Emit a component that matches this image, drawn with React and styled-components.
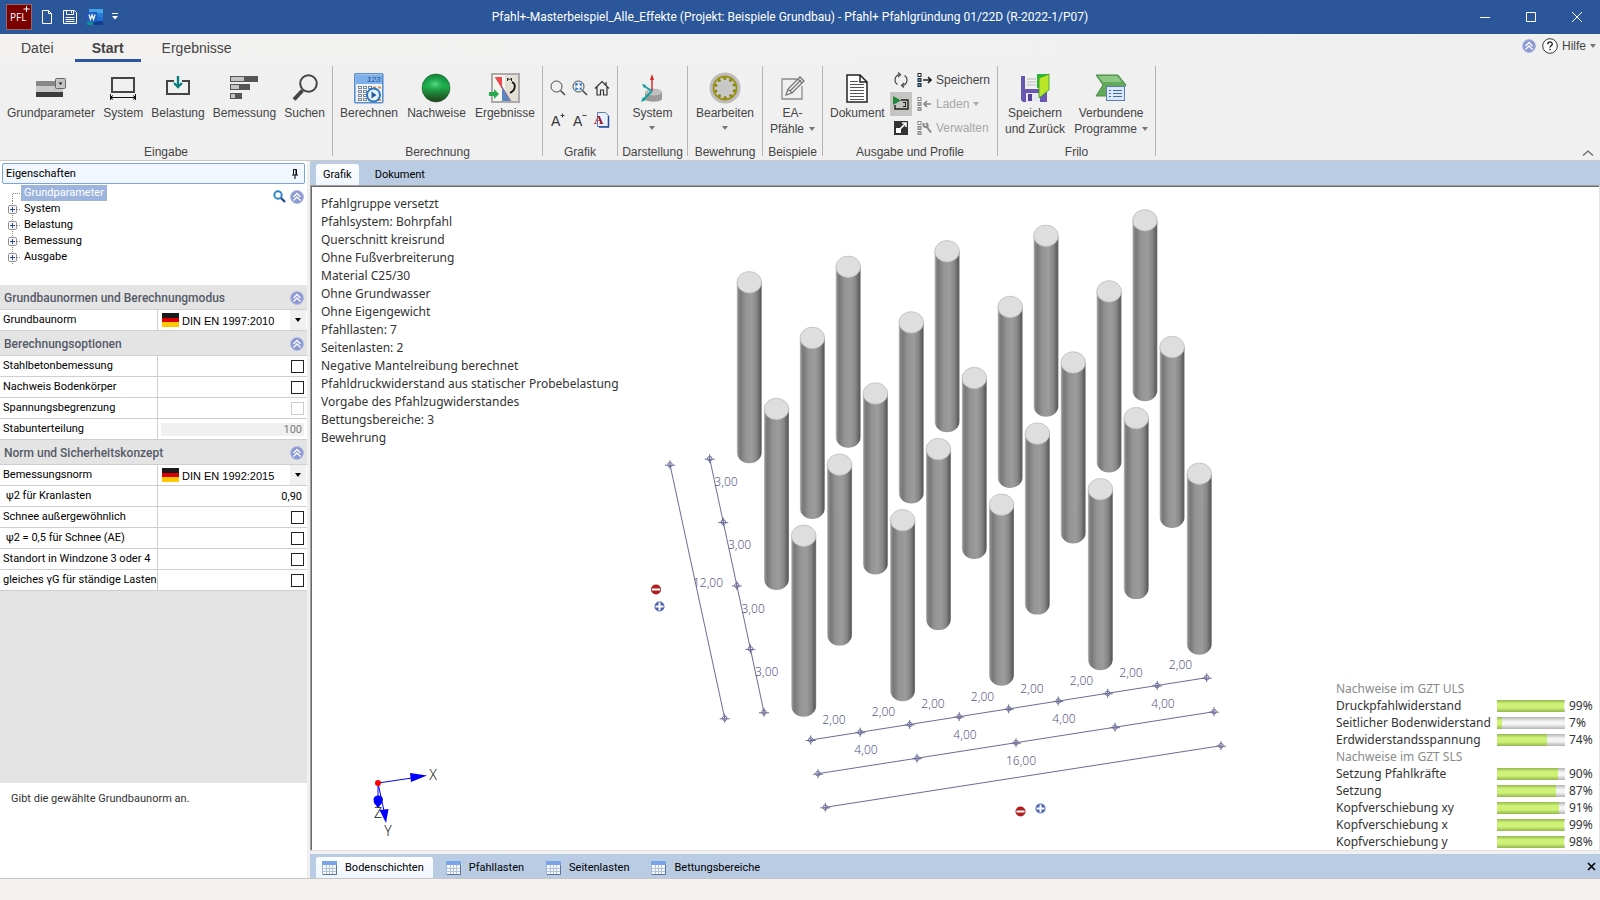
import React from 'react'
import styled, { createGlobalStyle, css } from 'styled-components'

const GlobalStyle = createGlobalStyle`
  * { box-sizing: border-box; }
  html, body { margin: 0; padding: 0; }
  body {
    font-family: 'Liberation Sans', Arial, sans-serif;
    font-size: 12px;
    color: #444;
    background: #f0f0f0;
  }
  button, input, select { font: inherit; color: inherit; margin: 0; }
  button { background: none; border: none; padding: 0; cursor: pointer; }
  svg { display: block; flex: none; }
`

const Window = styled.div`
  min-height: 100vh;
  display: flex;
  flex-direction: column;
`

/* title bar */

const TitleBar = styled.header`
  height: 34px;
  display: grid;
  grid-template-columns: 118px 1fr 138px;
  align-items: center;
  background: #2b579a;
  color: #fff;
`

const QuickAccess = styled.div`
  display: flex;
  align-items: center;
  gap: 9px;
  padding-left: 6px;
`

const Title = styled.h1`
  margin: 0;
  text-align: center;
  font: 400 12px/16px Roboto, sans-serif;
  white-space: nowrap;
`

const WindowControls = styled.div`
  display: grid;
  grid-template-columns: repeat(3, 46px);
`

const ControlButton = styled.button`
  height: 34px;
  display: flex;
  align-items: center;
  justify-content: center;
`

/* ribbon */

const RibbonTabs = styled.nav`
  height: 28px;
  display: flex;
  background: linear-gradient(90deg, #f3f2f1, #f0f0f0);
`

const RibbonTab = styled.button`
  padding: 3px ${({ $active }) => ($active ? 17 : 21)}px 0;
  font-size: 14px;
  line-height: 22px;
  font-weight: ${({ $active }) => ($active ? 700 : 400)};
  border-bottom: 3px solid ${({ $active }) => ($active ? '#2b579a' : 'transparent')};
`

const HelpArea = styled.div`
  margin-left: auto;
  height: 23px;
  padding-right: 4px;
  display: flex;
  align-items: center;
  gap: 6px;
`

const HelpButton = styled.button`
  display: flex;
  align-items: center;
  gap: 4px;
`

const RibbonBar = styled.div`
  display: flex;
  padding-top: 4px;
  height: 99px;
  background: #f0f0f0;
  border-bottom: 1px solid #c8c8c8;
`

const Group = styled.section`
  width: ${({ $width }) => $width}px;
  display: flex;
  flex-direction: column;
  padding-top: 6px;
`

const GroupTools = styled.div`
  flex: 1;
  display: flex;
  justify-content: ${({ $center }) => ($center ? 'center' : 'space-between')};
  align-items: flex-start;
  padding: 0 ${({ $pad }) => $pad || 0}px;
`

const GroupTitle = styled.div`
  text-align: center;
  line-height: 16px;
  white-space: nowrap;
`

const Separator = styled.div`
  width: 1px;
  height: 90px;
  background: #b4b4b4;
`

const BigButton = styled.button`
  display: flex;
  flex-direction: column;
  align-items: center;
  gap: 1px;
  line-height: 16px;
  white-space: nowrap;
`

const IconBox = styled.span`
  height: 32px;
  display: flex;
  align-items: center;
  justify-content: center;
`

const Lines = styled.span`
  display: flex;
  flex-direction: column;
  align-items: center;
  gap: ${({ $loose }) => ($loose ? 5 : 0)}px;
`

const Line = styled.span`
  display: flex;
  align-items: center;
  gap: 5px;
`

const Caret = styled.span`
  border: 3px solid transparent;
  border-top: 4px solid ${({ $color }) => $color || '#777'};
  border-bottom: none;
`

const SmallGrid = styled.div`
  display: grid;
  grid-template-columns: repeat(3, 22px);
  grid-auto-rows: 32px;
`

const SmallButton = styled.button`
  display: flex;
  align-items: center;
  justify-content: center;
  width: 22px;
  height: ${({ $tall }) => ($tall ? 32 : 24)}px;
  background: ${({ $pressed }) => ($pressed ? '#c6c4c2' : 'none')};
`

const SmallColumn = styled.div`
  display: flex;
  flex-direction: column;
  margin-top: -4px;
`

const TextButton = styled.button`
  display: flex;
  align-items: center;
  gap: 4px;
  height: 24px;
  &:disabled { color: #a8a8a8; cursor: default; }
`

const CollapseButton = styled.button`
  margin-left: auto;
  align-self: flex-end;
  padding: 0 6px 4px 0;
`

/* property panel */

const Workspace = styled.main`
  flex: 1;
  display: flex;
`

const panelText = css`
  font-family: Roboto, sans-serif;
  font-size: 11px;
`

const Panel = styled.aside`
  ${panelText}
  width: 307px;
  flex: none;
  margin-right: 3px;
  display: flex;
  flex-direction: column;
  background: #fff;
  color: #000;
`

const PanelHeader = styled.header`
  display: flex;
  justify-content: space-between;
  align-items: center;
  height: 21px;
  margin: 2px 2px 1px;
  padding: 0 5px 0 3px;
  border: 1px solid #7da2dc;
  border-radius: 2px;
  background: #f0f7ff;
`

const TreeArea = styled.div`
  display: flex;
  height: 100px;
  padding: 0 3px 0 8px;
`

const Tree = styled.ul`
  flex: 1;
  margin: 0;
  padding: 0;
  list-style: none;
`

const TreeItem = styled.li`
  display: flex;
  align-items: center;
  height: 16px;
`

const TreeLabel = styled.span`
  padding: 0 3px;
  line-height: 16px;
  background: ${({ $selected }) => ($selected ? '#9db4de' : 'none')};
  color: ${({ $selected }) => ($selected ? '#fff' : '#000')};
`

const TreeTools = styled.div`
  display: flex;
  align-items: flex-start;
  gap: 4px;
  padding-top: 5px;
`

const Category = styled.h2`
  margin: 0;
  height: 25px;
  padding: 1px 3px 0 4px;
  display: flex;
  align-items: center;
  justify-content: space-between;
  background: #e4e4e4;
  border-bottom: 1px solid #cfcfcf;
  color: #555a68;
  font: 500 12px/16px Roboto, sans-serif;
`

const PropRow = styled.div`
  display: grid;
  grid-template-columns: 157px 1fr;
  height: 21px;
  border-bottom: 1px solid #cfcfcf;
`

const PropLabel = styled.label`
  padding-left: ${({ $indent }) => ($indent ? 6 : 3)}px;
  line-height: 20px;
  white-space: nowrap;
`

const PropValue = styled.div`
  display: flex;
  align-items: center;
  justify-content: flex-end;
  padding: 0 3px;
  border-left: 1px solid #cfcfcf;
`

const NormValue = styled(PropValue)`
  padding: 0 1px 0 4px;
  gap: 3px;
`

const NormSelect = styled.select`
  flex: 1;
  height: 20px;
  padding: 2px 0 0;
  border: none;
  outline: none;
  appearance: none;
  background: #fff;
  font-family: 'Liberation Sans', sans-serif;
`

const SelectArrow = styled.span`
  width: 16px;
  height: 20px;
  display: flex;
  align-items: center;
  justify-content: center;
  background: #f0f0f0;
  pointer-events: none;
`

const NumberInput = styled.input`
  width: 100%;
  height: 13px;
  padding: 0 2px;
  border: none;
  outline: none;
  text-align: right;
  background: #fff;
  &:disabled { background: #f0f0f0; color: #7d7d7d; }
`

const Tick = styled.input`
  appearance: none;
  width: 13px;
  height: 13px;
  border: 1px solid #222;
  background: #fff;
  &:disabled { border-color: #ccc; }
  &:checked { background: #2b579a; }
`

const PanelFill = styled.div`
  flex: 1;
  background: #e3e3e3;
`

const Description = styled.p`
  margin: 0;
  height: 95px;
  padding: 8px 11px;
  line-height: 16px;
  color: #333;
`

/* document area */

const DocumentArea = styled.section`
  flex: 1;
  min-width: 0;
  display: flex;
  flex-direction: column;
`

const TabStrip = styled.nav`
  ${panelText}
  display: flex;
  align-items: flex-end;
  gap: ${({ $bottom }) => ($bottom ? 7 : 9)}px;
  height: 24px;
  padding: ${({ $bottom }) => ($bottom ? '0 4px 0 6px' : '3px 4px 0 6px')};
  background: #bacce4;
  color: #000;
`

const Tab = styled.button`
  display: flex;
  align-items: center;
  gap: 8px;
  height: 21px;
  padding: 0 7px;
  border-radius: 3px 3px 0 0;
  background: ${({ $active }) => ($active ? 'linear-gradient(#fdfeff, #eff6fe)' : 'none')};
`

const TableTab = styled(Tab)`
  padding: 0 9px 0 6px;
`

const CloseButton = styled.button`
  margin-left: auto;
  align-self: center;
`

const Canvas = styled.div`
  flex: 1;
  display: grid;
  margin-bottom: 3px;
  padding: 1px 0 0 1px;
  border: 1px solid #a0a0a0;
  border-right-color: #e3e3e3;
  border-bottom-color: #e3e3e3;
  box-shadow: inset 1px 1px 0 #696969;
  background: #fff;
  font-family: 'Noto Sans', sans-serif;
  font-size: 12px;
  color: #333;
  & > * { grid-area: 1 / 1; }
`

const Drawing = styled.svg`
  width: 100%;
  height: 100%;
`

const InfoList = styled.ul`
  margin: 0;
  padding: 8px 9px;
  list-style: none;
  line-height: 18px;
`

const Results = styled.table`
  place-self: end;
  margin-right: 1px;
  border-collapse: collapse;
  line-height: 17px;
  td, th { height: 17px; padding: 0; font-weight: 400; text-align: left; white-space: nowrap; }
  th[colspan] { color: #8a8a8a; }
`

const NameCell = styled.th`
  min-width: 161px;
`

const Track = styled.div`
  width: 68px;
  height: 12px;
  background: linear-gradient(#b4b4b4, #f2f2f2 35%, #f6f6f6 60%, #b4b4b4);
`

const Fill = styled.div`
  height: 12px;
  background: linear-gradient(#95b54e, #cdf277 30%, #cdf277 65%, #95b54e);
`

const PercentCell = styled.td`
  width: 33px;
  && { padding-left: 4px; }
`

const StatusBar = styled.footer`
  height: 22px;
  background: #f3f2f1;
  border-top: 1px solid #c8c6c4;
`

/* icons */

const PflLogo = () => (
  <svg width="26" height="26" viewBox="0 0 26 26">
    <rect x=".5" y=".5" width="25" height="25" fill="#7b0000" stroke="#8a6a6a" />
    <text x="4" y="17" fontFamily="Open Sans" fontSize="10" fill="#fff">PFL</text>
    <path d="M20.500 2v6M17.500 5h6" stroke="#fff" />
  </svg>
)

const NewIcon = () => (
  <svg width="12" height="16" viewBox="0 0 12 16" fill="none" stroke="#fff">
    <path d="M1.500 1.500h6l3 3v10h-9zM7.500 1.500v3h3" />
  </svg>
)

const SaveIcon = () => (
  <svg width="16" height="16" viewBox="0 0 16 16" fill="none" stroke="#fff">
    <path d="M1.500 1.500h11l2 2v11h-13zM4.500 1.500v4h7v-4M9.500 2v2M3.500 8.500h9M3.500 10.500h9M3.500 12.500h9" />
  </svg>
)

const WordIcon = () => (
  <svg width="16" height="16" viewBox="0 0 16 16">
    <rect x="2" width="14" height="4" fill="#41a5ee" />
    <rect x="2" y="4" width="14" height="4" fill="#2b7cd3" />
    <rect x="2" y="8" width="14" height="4" fill="#1f6fd0" />
    <rect y="12" width="16" height="4" fill="#0d8f98" />
    <rect x="6" y="12" width="10" height="4" fill="#103f91" />
    <rect y="3" width="10" height="10" fill="#1b5cbe" />
    <path d="M2 5.500l1.500 5L5 6l1.500 4.500L8 5.500" stroke="#fff" strokeWidth="1.200" fill="none" />
  </svg>
)

const MoreIcon = () => (
  <svg width="6" height="8" viewBox="0 0 6 8" fill="#fff">
    <path d="M0 0h6v1H0zM0 3h6L3 6.500z" />
  </svg>
)

const RoundChevron = () => (
  <svg width="14" height="14" viewBox="0 0 14 14" fill="none">
    <circle cx="7" cy="7" r="6.500" fill="#8c98d4" stroke="#b4bce0" />
    <path d="M3.500 7L7 3.500 10.500 7M3.500 10.500L7 7l3.500 3.500" stroke="#fff" strokeWidth="1.300" />
  </svg>
)

const HelpIcon = () => (
  <svg width="16" height="16" viewBox="0 0 16 16" fill="none" stroke="#333">
    <circle cx="8" cy="8" r="7.300" fill="#fff" />
    <path d="M5.700 6.200C5.700 3.300 10.300 3.300 10.300 6c0 1.700-2.300 1.700-2.300 3.600M8 10.800v1.500" strokeWidth="1.500" />
  </svg>
)

const ParamIcon = () => (
  <svg width="32" height="20" viewBox="0 0 32 20">
    <rect x="1" y="3" width="27" height="5" fill="#888" />
    <rect x="1" y="8" width="27" height="6" fill="#c9c9c9" />
    <rect x="1" y="14" width="27" height="5" fill="#3c3c3c" />
    <rect x="20.500" y=".5" width="10" height="10" rx="1" fill="#c4c4c4" stroke="#666" />
    <path d="M23.500 4.500h4l-2 2.500z" fill="#222" />
  </svg>
)

const SystemIcon = () => (
  <svg width="28" height="24" viewBox="0 0 28 24" fill="none">
    <rect x="3" y="2" width="22" height="14" stroke="#444" strokeWidth="2" />
    <path d="M1 21.500h26M1.500 18v6M26.500 18v6M4 19.500l-3 2 3 2M24 19.500l3 2-3 2" stroke="#111" />
  </svg>
)

const LoadIcon = () => (
  <svg width="26" height="26" viewBox="0 0 26 26" fill="none">
    <path d="M9 6H2v13h22V6h-7" stroke="#444" strokeWidth="2" />
    <path d="M13 1v10M9 8l4 4 4-4" stroke="#0b8080" strokeWidth="2.400" />
  </svg>
)

const DesignIcon = () => (
  <svg width="28" height="24" viewBox="0 0 28 24" stroke="#555">
    <rect x=".5" y=".5" width="14" height="5" fill="#c4c4c4" />
    <rect x="14.500" y=".5" width="13" height="5" fill="#555" />
    <rect x=".5" y="8.500" width="9" height="5" fill="#c4c4c4" />
    <rect x="10.500" y="8.500" width="9" height="5" fill="#555" />
    <rect x=".5" y="17.500" width="5" height="5" fill="#c4c4c4" />
    <rect x="6.500" y="17.500" width="5" height="5" fill="#555" />
  </svg>
)

const MagnifierIcon = () => (
  <svg width="26" height="28" viewBox="0 0 26 28" fill="none" stroke="#444">
    <circle cx="16.500" cy="9.500" r="8.300" strokeWidth="2" />
    <path d="M10.500 16.500L2 25.500" strokeWidth="4" />
  </svg>
)

const CalcIcon = () => (
  <svg width="30" height="31" viewBox="0 0 30 31">
    <rect x=".8" y=".8" width="28" height="29" rx="1" fill="#edf3fb" stroke="#5c8fce" strokeWidth="1.600" />
    <rect x="2" y="2" width="26" height="9" fill="#7fb0ee" />
    <text x="13" y="9" fontSize="8" fontStyle="italic" fill="#234a86">123</text>
    <g fill="#fff" stroke="#7c8797">
      {[13, 17, 21, 25].map((y) =>
        [4.5, 9.5, 14.5].map((x) => <rect key={x + '-' + y} x={x} y={y + 0.5} width="3" height="2" />)
      )}
    </g>
    <path d="M19 13.500h3v2h-3zM24 13.500h3v2h-3zM24 26h3v2h-3z" fill="#e58e3c" />
    <circle cx="19.500" cy="22" r="6.500" fill="#e8f2fb" stroke="#2f78bd" strokeWidth="2" />
    <path d="M17.500 18.500l5 3.500-5 3.500z" fill="#1d5f9f" />
  </svg>
)

const BallIcon = () => (
  <svg width="30" height="30" viewBox="0 0 30 30">
    <defs>
      <linearGradient id="ball" x1="0" y1="0" x2="0" y2="1">
        <stop offset="0" stopColor="#12883d" />
        <stop offset=".45" stopColor="#1cae4c" />
        <stop offset="1" stopColor="#24401a" />
      </linearGradient>
      <radialGradient id="shine">
        <stop offset="0" stopColor="#5ddc85" />
        <stop offset="1" stopColor="#1cae4c" stopOpacity="0" />
      </radialGradient>
    </defs>
    <circle cx="15" cy="15" r="14" fill="url(#ball)" stroke="#1a5a2b" strokeWidth=".6" />
    <ellipse cx="14" cy="11" rx="11" ry="8" fill="url(#shine)" />
  </svg>
)

const ResultIcon = () => (
  <svg width="31" height="30" viewBox="0 0 31 30">
    <rect x="3" y="1" width="27" height="28" fill="#f6f4ee" stroke="#aaa" strokeWidth="2" />
    <rect x="16" y="2" width="13" height="26" fill="#e4dfd4" />
    <path d="M6 4h7v12z" fill="#f04a50" />
    <path d="M13 13l9 15h-9z" fill="#5a86c4" />
    <path d="M6 4l16 24" stroke="#b55" strokeWidth=".6" />
    <path d="M23 9c4 2 4 8-2 11" fill="none" stroke="#111" strokeWidth="1.800" />
    <path d="M18.500 8V5l2 2 2-2v3" fill="none" stroke="#222" />
    <path d="M0 19h5v-3l5 5-5 5v-3H0z" fill="#2aa94a" />
  </svg>
)

const ZoomIcon = ({ extents }) => (
  <svg width="16" height="16" viewBox="0 0 16 16" fill="none" stroke="#444">
    <circle cx="6.500" cy="6.500" r="5.500" />
    <path d="M10.500 10.500l4.500 4.500" strokeWidth="1.500" />
    {extents && <path d="M4 6V4h2M7.500 4H9v2M9 7.500V9H7.500M6 9H4V7.500" stroke="#1b74d0" strokeWidth="1.400" />}
  </svg>
)

const HomeIcon = () => (
  <svg width="16" height="16" viewBox="0 0 16 16" fill="none" stroke="#333" strokeWidth="1.200">
    <path d="M1 8.500L8 1.500l7 7M3 7v8h3.500v-5h3v5H13V7M12 5V2" />
  </svg>
)

const FontSizeIcon = ({ sign }) => (
  <svg width="16" height="16" viewBox="0 0 16 16" stroke="#444">
    <text x="1" y="14" fontSize="14" fill="#333" stroke="none">A</text>
    <path d={sign === '+' ? 'M10.500 3.500h4M12.500 1.500v4' : 'M10.500 3.500h4'} />
  </svg>
)

const FontDocIcon = () => (
  <svg width="16" height="18" viewBox="0 0 16 18">
    <path d="M3.500 1.500h8l3 3v11h-11z" fill="#e9effb" stroke="#5a7bc0" />
    <path d="M14.500 5v11H5" fill="none" stroke="#24499c" strokeWidth="1.500" />
    <text x="0" y="13" fontFamily="Liberation Serif" fontWeight="700" fontSize="13" fill="#9a0d18">A</text>
  </svg>
)

const PileSystemIcon = () => (
  <svg width="22" height="30" viewBox="0 0 22 30">
    <path d="M4 19v7c0 3.500 17 3.500 17 0v-7z" fill="#9a9a9a" />
    <ellipse cx="12.500" cy="19" rx="8.500" ry="3.500" fill="#c0c0c0" />
    <path d="M11 18V5" stroke="#d22" strokeWidth="1.400" />
    <path d="M11 1l2 6H9z" fill="#d22" />
    <path d="M11 18L3 26M11 18L3 13" stroke="#12a0a0" strokeWidth="1.800" />
    <path d="M0 29l5-2-3-3zM1 11l2 4 2-3z" fill="#12a0a0" />
  </svg>
)

const RebarIcon = () => (
  <svg width="32" height="32" viewBox="0 0 32 32">
    <circle cx="16" cy="16" r="15.500" fill="#bdbdbd" />
    <circle cx="16" cy="16" r="11.500" fill="#c8c8c8" stroke="#9a9210" strokeWidth="1.800" />
    {Array.from({ length: 10 }, (_, i) => {
      const a = (i * Math.PI) / 5 + 0.3
      return <circle key={i} cx={16 + 9.5 * Math.cos(a)} cy={16 + 9.5 * Math.sin(a)} r="1.500" fill="#8c8510" />
    })}
  </svg>
)

const PencilIcon = () => (
  <svg width="26" height="26" viewBox="0 0 26 26" fill="none" stroke="#8a8a8a" strokeWidth="1.300">
    <path d="M17 4H2v20h20V11" />
    <path d="M6 20l2-6L20 2l4 4-12 12zM8 14l4 4M18 4l4 4M10 16L21 5" stroke="#777" />
  </svg>
)

const DocIcon = () => (
  <svg width="22" height="29" viewBox="0 0 22 29" fill="none">
    <path d="M1 1h13l7 7v20H1z" fill="#fff" stroke="#222" strokeWidth="1.500" />
    <path d="M14 1v7h7" stroke="#222" strokeWidth="1.500" />
    <path d="M4 7.500h8M4 10.500h14M4 13.500h14M4 16.500h14M4 19.500h14M4 22.500h14M4 25.500h14" stroke="#555" />
  </svg>
)

const RefreshIcon = () => (
  <svg width="16" height="16" viewBox="0 0 16 16" fill="none" stroke="#444" strokeWidth="1.200">
    <path d="M6.500 2.500A5.500 5.500 0 0 0 4.500 12.500M9.500 13.500A5.500 5.500 0 0 0 11.500 3.500" />
    <path d="M5 .5l2.500 2L5 5M11 11l-2.500 2.500 2.500 2" />
  </svg>
)

const PreviewIcon = () => (
  <svg width="18" height="16" viewBox="0 0 18 16">
    <path d="M9 4h7v9H3V9" fill="none" stroke="#222" strokeWidth="1.400" />
    <path d="M1 0l8 4.500L1 9z" fill="#1f8a3a" />
    <path d="M13.500 6v5M11 6.500h2M11 10.500h2" stroke="#222" />
  </svg>
)

const OpenOutIcon = () => (
  <svg width="16" height="16" viewBox="0 0 16 16">
    <rect x="1" y="1" width="14" height="14" fill="#333" />
    <path d="M3 8h5v5H3z" fill="#fff" />
    <path d="M7 9l6-6M9 3h4v4" stroke="#fff" strokeWidth="1.600" fill="none" />
  </svg>
)

const ProfileIcon = ({ kind }) => {
  const color = kind === 'save' ? '#222' : '#888'
  return (
    <svg width="15" height="16" viewBox="0 0 15 16" fill="none" stroke={color}>
      <rect x="1" y="1.500" width="3" height="3" fill="#fff" />
      <rect x="1" y="6.500" width="3" height="3" fill={kind === 'save' ? '#3aa0e8' : '#bbb'} />
      <rect x="1" y="11.500" width="3" height="3" fill={kind === 'save' ? '#3aa0e8' : '#bbb'} />
      {kind === 'save' && <path d="M6 8h8M11 5l3 3-3 3" strokeWidth="1.600" />}
      {kind === 'load' && <path d="M14 8H7M10 5L7 8l3 3" strokeWidth="1.600" />}
      {kind === 'manage' && <path d="M6.500 3v2.500L8 7h2.500V4.500L9 3M9.500 6.500l4.500 6" strokeWidth="2" />}
    </svg>
  )
}

const SaveBackIcon = () => (
  <svg width="30" height="30" viewBox="0 0 30 30">
    <path d="M1 3h26v26H3l-2-2z" fill="#6a58b0" />
    <rect x="5" y="3" width="14" height="13" fill="#f0f0f0" />
    <path d="M7 6h9M7 9h9M7 12h9" stroke="#bbb" />
    <rect x="6" y="20" width="14" height="9" fill="#e8e8ee" />
    <rect x="8" y="21" width="4" height="7" fill="#55459a" />
    <path d="M17 1h12v14h-12z" fill="#27b53c" />
    <path d="M19 5l10-4v16l-10 8z" fill="#b9e626" stroke="#2c9e28" strokeWidth=".8" />
  </svg>
)

const LinkedIcon = () => (
  <svg width="32" height="28" viewBox="0 0 32 28">
    <path d="M1 1h22l8 10-8 11H1l7-11z" fill="#62a95b" stroke="#4c8a48" />
    <path d="M3 2h19l5 6H8z" fill="#8cc884" />
    <rect x="11.500" y="12.500" width="18" height="14" fill="#dbe8f8" stroke="#5b7fb5" />
    <path d="M14 16.500h2M14 19.500h2M14 22.500h2M18 16.500h9M18 19.500h9M18 22.500h9" stroke="#4668a8" />
  </svg>
)

const CollapseIcon = () => (
  <svg width="12" height="6" viewBox="0 0 12 6" fill="none" stroke="#666" strokeWidth="1.300">
    <path d="M1 5.500L6 1l5 4.500" />
  </svg>
)

const PinIcon = () => (
  <svg width="8" height="10" viewBox="0 0 8 10" fill="none" stroke="#000">
    <path d="M2.500 5.500V.5h3v5M5 1v5M1 6h6M4 6v4" />
  </svg>
)

const SearchBlueIcon = () => (
  <svg width="13" height="13" viewBox="0 0 13 13" fill="none">
    <circle cx="5" cy="5" r="3.700" stroke="#2f86c8" strokeWidth="2" />
    <path d="M8 8l4 4" stroke="#2a4a8c" strokeWidth="2.400" />
  </svg>
)

const TreeNode = ({ root }) => (
  <svg width="13" height="16" viewBox="0 0 13 16" fill="none">
    {root ? (
      <path d="M4.500 16V8.500H13" stroke="#888" strokeDasharray="1 1" />
    ) : (
      <>
        <path d="M4.500 0v16M9 8.500h4" stroke="#888" strokeDasharray="1 1" />
        <rect x=".5" y="4.500" width="8" height="8" rx="1" fill="#f6f6f6" stroke="#8f8f8f" />
        <path d="M2 8.500h5M4.500 6v5" stroke="#2a4a9a" />
      </>
    )}
  </svg>
)

const Flag = () => (
  <svg width="17" height="14" viewBox="0 0 17 14">
    <rect width="17" height="5" fill="#1a1a1a" />
    <rect y="5" width="17" height="5" fill="#d80000" />
    <rect y="9" width="17" height="5" fill="#ffc800" />
  </svg>
)

const TableIcon = () => (
  <svg width="15" height="14" viewBox="0 0 15 14">
    <rect x=".5" y=".5" width="14" height="13" fill="#f4f8ff" stroke="#a3b8d8" />
    <rect width="15" height="4" fill="#7ba3e8" />
    <path d="M1 7.500h13M1 10.500h13M4.500 4v9M7.500 4v9M10.500 4v9" stroke="#b4c3da" />
    <path d="M14.500 4v9.500H1" stroke="#5c7394" fill="none" />
  </svg>
)

/* ribbon groups */

const Tool = ({ icon, lines, caret }) => (
  <BigButton>
    <IconBox>{icon}</IconBox>
    <Lines $loose={caret === 'below'}>
      {lines.map((line, i) => (
        <Line key={line}>
          {line}
          {caret === 'inline' && i === lines.length - 1 && <Caret />}
        </Line>
      ))}
      {caret === 'below' && <Caret />}
    </Lines>
  </BigButton>
)

const Ribbon = () => (
  <RibbonBar>
    <Group $width={332}>
      <GroupTools $pad={7}>
        <Tool icon={<ParamIcon />} lines={['Grundparameter']} />
        <Tool icon={<SystemIcon />} lines={['System']} />
        <Tool icon={<LoadIcon />} lines={['Belastung']} />
        <Tool icon={<DesignIcon />} lines={['Bemessung']} />
        <Tool icon={<MagnifierIcon />} lines={['Suchen']} />
      </GroupTools>
      <GroupTitle>Eingabe</GroupTitle>
    </Group>
    <Separator />
    <Group $width={209}>
      <GroupTools $pad={7}>
        <Tool icon={<CalcIcon />} lines={['Berechnen']} />
        <Tool icon={<BallIcon />} lines={['Nachweise']} />
        <Tool icon={<ResultIcon />} lines={['Ergebnisse']} />
      </GroupTools>
      <GroupTitle>Berechnung</GroupTitle>
    </Group>
    <Separator />
    <Group $width={74}>
      <GroupTools $center>
        <SmallGrid>
          <SmallButton $tall aria-label="Zoom"><ZoomIcon /></SmallButton>
          <SmallButton $tall aria-label="Zoom Fenster"><ZoomIcon extents /></SmallButton>
          <SmallButton $tall aria-label="Vollbild"><HomeIcon /></SmallButton>
          <SmallButton $tall aria-label="Schrift größer"><FontSizeIcon sign="+" /></SmallButton>
          <SmallButton $tall aria-label="Schrift kleiner"><FontSizeIcon sign="-" /></SmallButton>
          <SmallButton $tall aria-label="Schriftart"><FontDocIcon /></SmallButton>
        </SmallGrid>
      </GroupTools>
      <GroupTitle>Grafik</GroupTitle>
    </Group>
    <Separator />
    <Group $width={69}>
      <GroupTools $center>
        <Tool icon={<PileSystemIcon />} lines={['System']} caret="below" />
      </GroupTools>
      <GroupTitle>Darstellung</GroupTitle>
    </Group>
    <Separator />
    <Group $width={74}>
      <GroupTools $center>
        <Tool icon={<RebarIcon />} lines={['Bearbeiten']} caret="below" />
      </GroupTools>
      <GroupTitle>Bewehrung</GroupTitle>
    </Group>
    <Separator />
    <Group $width={59}>
      <GroupTools $center>
        <Tool icon={<PencilIcon />} lines={['EA-', 'Pfähle']} caret="inline" />
      </GroupTools>
      <GroupTitle>Beispiele</GroupTitle>
    </Group>
    <Separator />
    <Group $width={174}>
      <GroupTools $pad={7}>
        <Tool icon={<DocIcon />} lines={['Dokument']} />
        <SmallColumn>
          <SmallButton aria-label="Aktualisieren"><RefreshIcon /></SmallButton>
          <SmallButton $pressed aria-label="Vorschau"><PreviewIcon /></SmallButton>
          <SmallButton aria-label="Extern öffnen"><OpenOutIcon /></SmallButton>
        </SmallColumn>
        <SmallColumn>
          <TextButton><ProfileIcon kind="save" />Speichern</TextButton>
          <TextButton disabled><ProfileIcon kind="load" />Laden <Caret $color="#aaa" /></TextButton>
          <TextButton disabled><ProfileIcon kind="manage" />Verwalten</TextButton>
        </SmallColumn>
      </GroupTools>
      <GroupTitle>Ausgabe und Profile</GroupTitle>
    </Group>
    <Separator />
    <Group $width={157}>
      <GroupTools $pad={7}>
        <Tool icon={<SaveBackIcon />} lines={['Speichern', 'und Zurück']} />
        <Tool icon={<LinkedIcon />} lines={['Verbundene', 'Programme']} caret="inline" />
      </GroupTools>
      <GroupTitle>Frilo</GroupTitle>
    </Group>
    <Separator />
    <CollapseButton aria-label="Menüband reduzieren"><CollapseIcon /></CollapseButton>
  </RibbonBar>
)

/* property rows */

const NormRow = ({ id, label, value }) => (
  <PropRow>
    <PropLabel htmlFor={id}>{label}</PropLabel>
    <NormValue>
      <Flag />
      <NormSelect id={id} defaultValue={value}>
        <option>{value}</option>
      </NormSelect>
      <SelectArrow><Caret $color="#000" /></SelectArrow>
    </NormValue>
  </PropRow>
)

const CheckRow = ({ id, label, indent, disabled }) => (
  <PropRow>
    <PropLabel htmlFor={id} $indent={indent}>{label}</PropLabel>
    <PropValue><Tick type="checkbox" id={id} disabled={disabled} /></PropValue>
  </PropRow>
)

const NumberRow = ({ id, label, value, indent, disabled }) => (
  <PropRow>
    <PropLabel htmlFor={id} $indent={indent}>{label}</PropLabel>
    <PropValue><NumberInput id={id} defaultValue={value} disabled={disabled} /></PropValue>
  </PropRow>
)

const CategoryHead = ({ children }) => (
  <Category>
    {children}
    <button aria-label="Einklappen"><RoundChevron /></button>
  </Category>
)

const PropertyPanel = () => (
  <Panel>
    <PanelHeader>
      Eigenschaften
      <button aria-label="Anheften"><PinIcon /></button>
    </PanelHeader>
    <TreeArea>
      <Tree>
        <TreeItem><TreeNode root /><TreeLabel $selected>Grundparameter</TreeLabel></TreeItem>
        {['System', 'Belastung', 'Bemessung', 'Ausgabe'].map((name) => (
          <TreeItem key={name}><TreeNode /><TreeLabel>{name}</TreeLabel></TreeItem>
        ))}
      </Tree>
      <TreeTools>
        <button aria-label="Suchen"><SearchBlueIcon /></button>
        <button aria-label="Alles einklappen"><RoundChevron /></button>
      </TreeTools>
    </TreeArea>
    <CategoryHead>Grundbaunormen und Berechnungmodus</CategoryHead>
    <NormRow id="grundbaunorm" label="Grundbaunorm" value="DIN EN 1997:2010" />
    <CategoryHead>Berechnungsoptionen</CategoryHead>
    <CheckRow id="stahlbeton" label="Stahlbetonbemessung" />
    <CheckRow id="bodenkoerper" label="Nachweis Bodenkörper" />
    <CheckRow id="spannung" label="Spannungsbegrenzung" disabled />
    <NumberRow id="stab" label="Stabunterteilung" value="100" disabled />
    <CategoryHead>Norm und Sicherheitskonzept</CategoryHead>
    <NormRow id="bemessungsnorm" label="Bemessungsnorm" value="DIN EN 1992:2015" />
    <NumberRow id="psi2" label="ψ2 für Kranlasten" value="0,90" indent />
    <CheckRow id="schnee" label="Schnee außergewöhnlich" />
    <CheckRow id="psi2ae" label="ψ2 = 0,5 für Schnee (AE)" indent />
    <CheckRow id="windzone" label="Standort in Windzone 3 oder 4" />
    <CheckRow id="gamma" label="gleiches γG für ständige Lasten" />
    <PanelFill />
    <Description>Gibt die gewählte Grundbaunorm an.</Description>
  </Panel>
)

/* 3d view */

const PILE_LENGTH = 170
const ROW_STEP = [13.6, 63.35]
const COL_STEP = [98.9, -15.5]

const piles = []
for (let row = 0; row < 5; row++) {
  const odd = row % 2
  for (let col = 0; col < 5 - odd; col++) {
    const c = col + odd / 2
    piles.push([437.3 + row * ROW_STEP[0] + c * COL_STEP[0], 95.3 + row * ROW_STEP[1] + c * COL_STEP[1]])
  }
}

const Pile = ({ x, y }) => (
  <g>
    <path
      d={`M${x - 12.5} ${y}v${PILE_LENGTH}a12.500 11 0 0 0 25 0v${-PILE_LENGTH}z`}
      fill="url(#pile)"
    />
    <ellipse cx={x} cy={y} rx="12.300" ry="10.700" fill="#dedede" stroke="#bdbdbd" strokeWidth=".8" />
  </g>
)

const DimLine = ({ from, to, parts, label, at }) => {
  const dx = (to[0] - from[0]) / parts
  const dy = (to[1] - from[1]) / parts
  const nodes = Array.from({ length: parts + 1 }, (_, i) => [from[0] + dx * i, from[1] + dy * i])
  return (
    <g stroke="#6c6c98" strokeWidth="1" fill="none">
      <path d={`M${from[0]} ${from[1]}L${to[0]} ${to[1]}`} />
      {nodes.map(([x, y]) => (
        <g key={x}>
          <path d={`M${x - 5} ${y + 0.5}h10M${x} ${y - 4.5}v9`} />
          <circle cx={x} cy={y} r="2.300" />
        </g>
      ))}
      {Array.from({ length: parts }, (_, i) => (
        <text key={i} x={at[0] + dx * i} y={at[1] + dy * i + 4} textAnchor="middle" fontWeight="300" fill="#5c5c8c" stroke="none">
          {label}
        </text>
      ))}
    </g>
  )
}

const MinusBadge = ({ x, y }) => (
  <g>
    <circle cx={x} cy={y} r="5" fill="#b02020" />
    <path d={`M${x - 4} ${y}h8`} stroke="#fff" strokeWidth="2" />
  </g>
)

const PlusBadge = ({ x, y }) => (
  <g>
    <circle cx={x} cy={y} r="5" fill="#4a62b0" />
    <path d={`M${x - 4} ${y}h8M${x} ${y - 4}v8`} stroke="#fff" strokeWidth="2" />
  </g>
)

const PileView = () => (
  <Drawing role="img" aria-label="Pfahlgruppe">
    <defs>
      <linearGradient id="pile">
        <stop offset="0" stopColor="#c8c8c8" />
        <stop offset=".06" stopColor="#8a8a8a" />
        <stop offset=".14" stopColor="#787878" />
        <stop offset=".35" stopColor="#949494" />
        <stop offset=".6" stopColor="#9c9c9c" />
        <stop offset=".8" stopColor="#868686" />
        <stop offset=".95" stopColor="#5c5c5c" />
        <stop offset="1" stopColor="#8a8a8a" />
      </linearGradient>
    </defs>
    {piles.map(([x, y]) => <Pile key={x + '/' + y} x={x} y={y} />)}
    <DimLine from={[358, 277.7]} to={[412.7, 531.3]} parts={1} label="12,00" at={[396, 396]} />
    <DimLine from={[397.7, 271.7]} to={[452, 525.3]} parts={4} label="3,00" at={[414, 295]} />
    <DimLine from={[498.7, 553]} to={[894.7, 490.7]} parts={8} label="2,00" at={[522, 533]} />
    <DimLine from={[506, 586.7]} to={[902, 524.7]} parts={4} label="4,00" at={[554, 563]} />
    <DimLine from={[513.3, 620.3]} to={[909, 558.7]} parts={1} label="16,00" at={[709, 574]} />
    <MinusBadge x={344} y={402.5} />
    <PlusBadge x={347.5} y={419.5} />
    <MinusBadge x={708.5} y={624.5} />
    <PlusBadge x={728.5} y={621.5} />
    <g stroke="#00f" fill="#00f">
      <path d="M66 596L100 591M66 596V612M66 596L72 624" />
      <path d="M115 588.500L98 586l1 9z" stroke="none" />
      <path d="M61.500 612a5 5 0 0 1 9.500 0l-1 4-4 5-4-5z" stroke="none" />
      <path d="M67.500 623l9-1-2.500 14z" stroke="none" />
    </g>
    <circle cx="66" cy="596" r="3" fill="#f00" />
    <g fill="#222" fontSize="14" fontWeight="300">
      <text x="121" y="593" textAnchor="middle">X</text>
      <text x="66" y="631" textAnchor="middle">Z</text>
      <text x="76" y="649" textAnchor="middle">Y</text>
    </g>
  </Drawing>
)

const info = [
  'Pfahlgruppe versetzt',
  'Pfahlsystem: Bohrpfahl',
  'Querschnitt kreisrund',
  'Ohne Fußverbreiterung',
  'Material C25/30',
  'Ohne Grundwasser',
  'Ohne Eigengewicht',
  'Pfahllasten: 7',
  'Seitenlasten: 2',
  'Negative Mantelreibung berechnet',
  'Pfahldruckwiderstand aus statischer Probebelastung',
  'Vorgabe des Pfahlzugwiderstandes',
  'Bettungsbereiche: 3',
  'Bewehrung',
]

const results = [
  ['Nachweise im GZT ULS'],
  ['Druckpfahlwiderstand', 99],
  ['Seitlicher Bodenwiderstand', 7],
  ['Erdwiderstandsspannung', 74],
  ['Nachweise im GZT SLS'],
  ['Setzung Pfahlkräfte', 90],
  ['Setzung', 87],
  ['Kopfverschiebung xy', 91],
  ['Kopfverschiebung x', 99],
  ['Kopfverschiebung y', 98],
]

const ResultTable = () => (
  <Results>
    <tbody>
      {results.map(([name, value]) =>
        value === undefined ? (
          <tr key={name}><th colSpan="3">{name}</th></tr>
        ) : (
          <tr key={name}>
            <NameCell>{name}</NameCell>
            <td><Track><Fill style={{ width: value + '%' }} /></Track></td>
            <PercentCell>{value}%</PercentCell>
          </tr>
        )
      )}
    </tbody>
  </Results>
)

const App = () => (
  <Window>
    <GlobalStyle />
    <TitleBar>
      <QuickAccess>
        <PflLogo />
        <button aria-label="Neu"><NewIcon /></button>
        <button aria-label="Speichern"><SaveIcon /></button>
        <button aria-label="Word"><WordIcon /></button>
        <button aria-label="Mehr"><MoreIcon /></button>
      </QuickAccess>
      <Title>Pfahl+-Masterbeispiel_Alle_Effekte (Projekt: Beispiele Grundbau) - Pfahl+ Pfahlgründung 01/22D (R-2022-1/P07)</Title>
      <WindowControls>
        <ControlButton aria-label="Minimieren">
          <svg width="10" height="10" stroke="#fff"><path d="M0 5.500h10" /></svg>
        </ControlButton>
        <ControlButton aria-label="Maximieren">
          <svg width="10" height="10" stroke="#fff" fill="none"><path d="M.5.5h9v9h-9z" /></svg>
        </ControlButton>
        <ControlButton aria-label="Schließen">
          <svg width="10" height="10" stroke="#fff"><path d="M0 0l10 10M10 0L0 10" /></svg>
        </ControlButton>
      </WindowControls>
    </TitleBar>
    <RibbonTabs>
      <RibbonTab>Datei</RibbonTab>
      <RibbonTab $active>Start</RibbonTab>
      <RibbonTab>Ergebnisse</RibbonTab>
      <HelpArea>
        <button aria-label="Menüband"><RoundChevron /></button>
        <HelpButton><HelpIcon />Hilfe <Caret /></HelpButton>
      </HelpArea>
    </RibbonTabs>
    <Ribbon />
    <Workspace>
      <PropertyPanel />
      <DocumentArea>
        <TabStrip>
          <Tab $active>Grafik</Tab>
          <Tab>Dokument</Tab>
        </TabStrip>
        <Canvas>
          <PileView />
          <InfoList>
            {info.map((line) => <li key={line}>{line}</li>)}
          </InfoList>
          <ResultTable />
        </Canvas>
        <TabStrip $bottom>
          <TableTab $active><TableIcon />Bodenschichten</TableTab>
          <TableTab><TableIcon />Pfahllasten</TableTab>
          <TableTab><TableIcon />Seitenlasten</TableTab>
          <TableTab><TableIcon />Bettungsbereiche</TableTab>
          <CloseButton aria-label="Schließen">
            <svg width="9" height="9" stroke="#000" strokeWidth="1.600"><path d="M1 1l7 7M8 1L1 8" /></svg>
          </CloseButton>
        </TabStrip>
      </DocumentArea>
    </Workspace>
    <StatusBar />
  </Window>
)

export default App
